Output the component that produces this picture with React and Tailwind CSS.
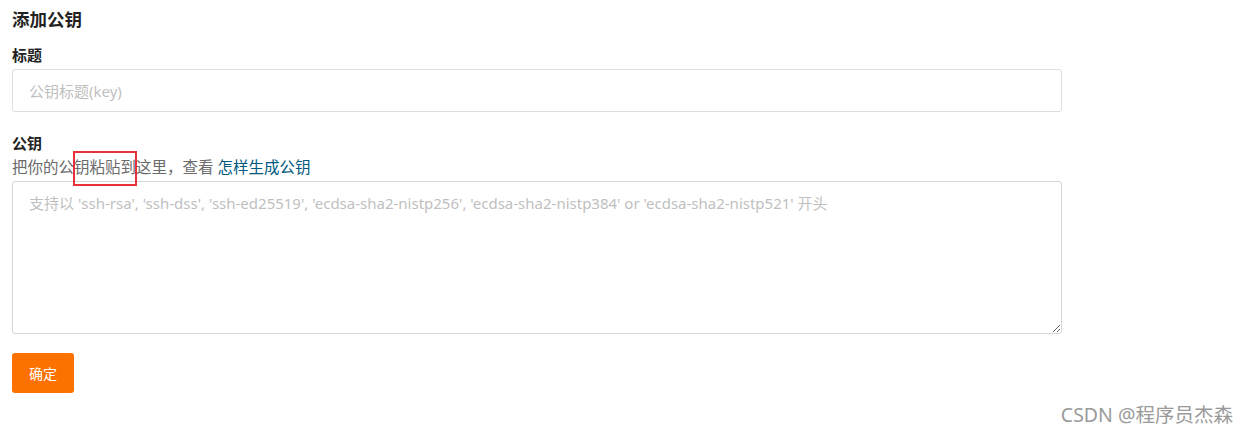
import React from 'react';

export default function App() {
    return (
        <div className="relative w-[1248px] h-[434px] bg-white overflow-hidden font-['Noto_Sans','Noto_Sans_CJK_SC',sans-serif]">
            <div className="pl-3 pt-[7px] w-[1062px]">
                <h3 className="text-[17.5px] leading-[24px] font-bold text-[#222]">添加公钥</h3>

                <div className="mt-[14px] text-[15px] leading-[20px] font-bold text-[#222]">标题</div>
                <input
                    className="mt-[4px] block w-[1050px] h-[43px] px-4 rounded-[3px] border border-[#dcdde0] text-[15px] placeholder:text-[#bfbfbf] outline-none"
                    placeholder="公钥标题(key)"
                />

                <div className="mt-[21px] text-[15px] leading-[20px] font-bold text-[#222]">公钥</div>
                <p className="mt-[4px] text-[15.5px] leading-[20px] text-[#6b6b6b]">
                    把你的公
                    <span className="relative">
                        钥粘贴到
                        <span className="absolute -left-[1px] -right-[1px] -top-[5px] -bottom-[8px] border-2 border-[#e8313a]" />
                    </span>
                    这里，查看 <a className="text-[#005980]">怎样生成公钥</a>
                </p>
                <textarea
                    className="mt-[4px] block w-[1050px] h-[153px] px-4 py-[10px] rounded-[3px] border border-[#d5d6dc] text-[15px] leading-[22px] placeholder:text-[#bfbfbf] outline-none resize-y"
                    placeholder="支持以 'ssh-rsa', 'ssh-dss', 'ssh-ed25519', 'ecdsa-sha2-nistp256', 'ecdsa-sha2-nistp384' or 'ecdsa-sha2-nistp521' 开头"
                />

                <button className="mt-[19px] w-[62px] h-[40px] rounded-[3px] bg-[#fc7100] text-white text-[14px]">
                    确定
                </button>
            </div>

            <div className="absolute right-[15px] bottom-[6px] text-[19.5px] leading-[26px] text-[#9a9a9a]">
                CSDN @程序员杰森
            </div>
        </div>
    );
}
